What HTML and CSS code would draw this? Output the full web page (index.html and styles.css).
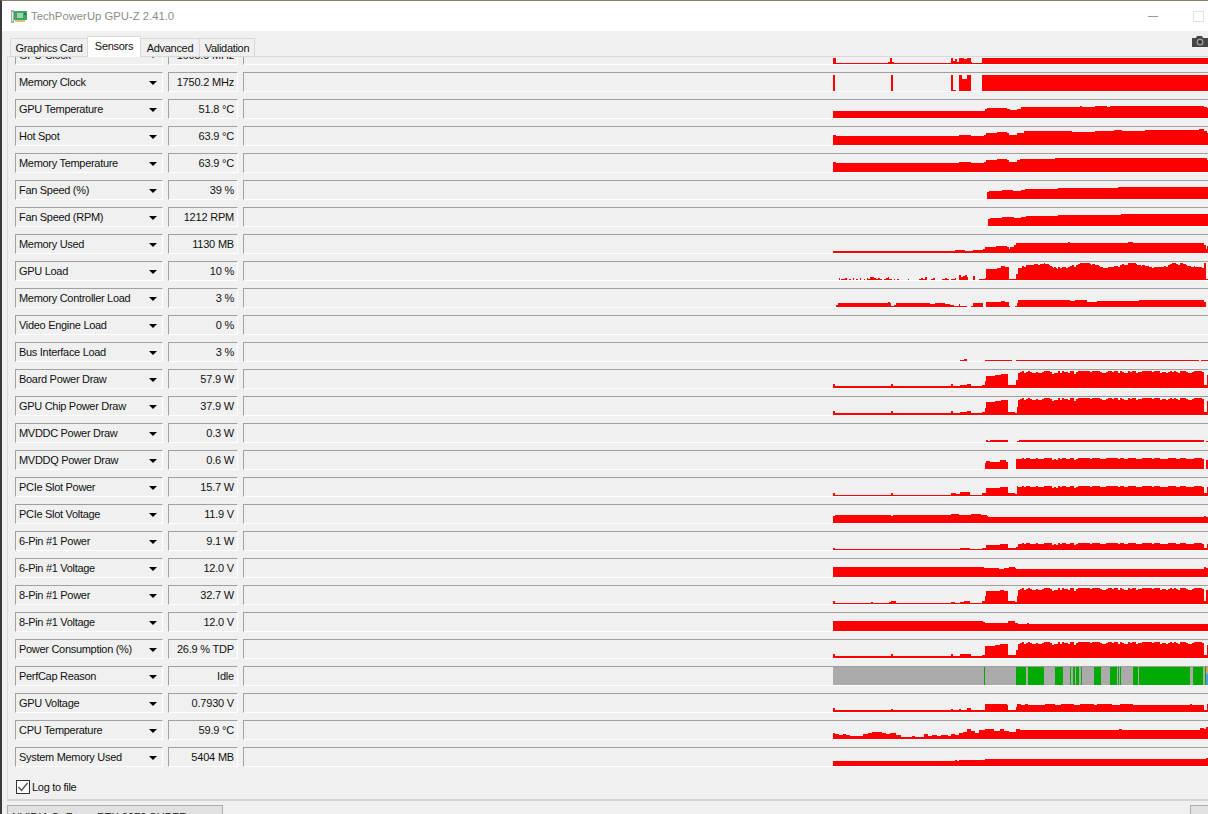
FILE: index.html
```html
<!DOCTYPE html>
<html>
<head>
  <title>TechPowerUp GPU-Z 2.41.0</title>
  <link rel="stylesheet" href="styles.css">
</head>
<body>
<div class="window">
  <header class="titlebar">
    <svg class="app-icon" width="16" height="15" viewBox="0 0 16 15">
      <rect x="0" y="1" width="3" height="13" fill="#a9b0ab"/>
      <rect x="1" y="3" width="1" height="9" fill="#e4e8e5"/>
      <rect x="3" y="2" width="13" height="9" fill="#3fa564"/>
      <rect x="6" y="4" width="6" height="5" fill="#9fd0ae"/>
      <rect x="13" y="4" width="2" height="2" fill="#1f7a42"/>
      <rect x="4" y="11" width="10" height="2" fill="#d3c47a"/>
    </svg>
    <span class="app-title">TechPowerUp GPU-Z 2.41.0</span>
    <span class="win-min"></span>
    <span class="win-max"></span>
  </header>

  <nav class="tabbar">
    <a class="tab tab-graphics">Graphics Card</a>
    <a class="tab tab-sensors active">Sensors</a>
    <a class="tab tab-advanced">Advanced</a>
    <a class="tab tab-validation">Validation</a>
    <svg class="camera" width="16" height="11" viewBox="0 0 16 11">
      <path d="M0 2H4L5 0H10L11 2H16V11H0Z" fill="#444"/>
      <circle cx="8" cy="6" r="3.5" fill="#999"/>
      <circle cx="8" cy="6" r="2" fill="#333"/>
    </svg>
  </nav>

  <main class="panel">
    <div class="rows">
      <div class="row"><div class="combo">GPU Clock<i class="arrow"></i></div><div class="value">1605.0 MHz</div><div class="graph"></div></div>
      <div class="row"><div class="combo">Memory Clock<i class="arrow"></i></div><div class="value">1750.2 MHz</div><div class="graph"></div></div>
      <div class="row"><div class="combo">GPU Temperature<i class="arrow"></i></div><div class="value">51.8 °C</div><div class="graph"></div></div>
      <div class="row"><div class="combo">Hot Spot<i class="arrow"></i></div><div class="value">63.9 °C</div><div class="graph"></div></div>
      <div class="row"><div class="combo">Memory Temperature<i class="arrow"></i></div><div class="value">63.9 °C</div><div class="graph"></div></div>
      <div class="row"><div class="combo">Fan Speed (%)<i class="arrow"></i></div><div class="value">39 %</div><div class="graph"></div></div>
      <div class="row"><div class="combo">Fan Speed (RPM)<i class="arrow"></i></div><div class="value">1212 RPM</div><div class="graph"></div></div>
      <div class="row"><div class="combo">Memory Used<i class="arrow"></i></div><div class="value">1130 MB</div><div class="graph"></div></div>
      <div class="row"><div class="combo">GPU Load<i class="arrow"></i></div><div class="value">10 %</div><div class="graph"></div></div>
      <div class="row"><div class="combo">Memory Controller Load<i class="arrow"></i></div><div class="value">3 %</div><div class="graph"></div></div>
      <div class="row"><div class="combo">Video Engine Load<i class="arrow"></i></div><div class="value">0 %</div><div class="graph"></div></div>
      <div class="row"><div class="combo">Bus Interface Load<i class="arrow"></i></div><div class="value">3 %</div><div class="graph"></div></div>
      <div class="row"><div class="combo">Board Power Draw<i class="arrow"></i></div><div class="value">57.9 W</div><div class="graph"></div></div>
      <div class="row"><div class="combo">GPU Chip Power Draw<i class="arrow"></i></div><div class="value">37.9 W</div><div class="graph"></div></div>
      <div class="row"><div class="combo">MVDDC Power Draw<i class="arrow"></i></div><div class="value">0.3 W</div><div class="graph"></div></div>
      <div class="row"><div class="combo">MVDDQ Power Draw<i class="arrow"></i></div><div class="value">0.6 W</div><div class="graph"></div></div>
      <div class="row"><div class="combo">PCIe Slot Power<i class="arrow"></i></div><div class="value">15.7 W</div><div class="graph"></div></div>
      <div class="row"><div class="combo">PCIe Slot Voltage<i class="arrow"></i></div><div class="value">11.9 V</div><div class="graph"></div></div>
      <div class="row"><div class="combo">6-Pin #1 Power<i class="arrow"></i></div><div class="value">9.1 W</div><div class="graph"></div></div>
      <div class="row"><div class="combo">6-Pin #1 Voltage<i class="arrow"></i></div><div class="value">12.0 V</div><div class="graph"></div></div>
      <div class="row"><div class="combo">8-Pin #1 Power<i class="arrow"></i></div><div class="value">32.7 W</div><div class="graph"></div></div>
      <div class="row"><div class="combo">8-Pin #1 Voltage<i class="arrow"></i></div><div class="value">12.0 V</div><div class="graph"></div></div>
      <div class="row"><div class="combo">Power Consumption (%)<i class="arrow"></i></div><div class="value">26.9 % TDP</div><div class="graph"></div></div>
      <div class="row"><div class="combo">PerfCap Reason<i class="arrow"></i></div><div class="value">Idle</div><div class="graph"></div></div>
      <div class="row"><div class="combo">GPU Voltage<i class="arrow"></i></div><div class="value">0.7930 V</div><div class="graph"></div></div>
      <div class="row"><div class="combo">CPU Temperature<i class="arrow"></i></div><div class="value">59.9 °C</div><div class="graph"></div></div>
      <div class="row"><div class="combo">System Memory Used<i class="arrow"></i></div><div class="value">5404 MB</div><div class="graph"></div></div>
    </div>
    <label class="log">
      <svg class="check" width="14" height="14" viewBox="0 0 14 14">
        <rect x="0.5" y="0.5" width="13" height="13" fill="#fff" stroke="#333"/>
        <path d="M2.5 7L5.5 10.5L11.5 3" fill="none" stroke="#555" stroke-width="1.4"/>
      </svg>
      Log to file
    </label>
  </main>

  <footer class="bottom">
    <div class="gpu-select">NVIDIA GeForce RTX 2070 SUPER</div>
    <div class="close-btn"></div>
  </footer>
</div>
<script src="graph.js"></script>
</body>
</html>
```

FILE: styles.css
```css
html, body {
  margin: 0;
  padding: 0;
  height: 814px;
  overflow: hidden;
}

body {
  font-family: "Liberation Sans", Arial, sans-serif;
  font-size: 11px;
  letter-spacing: -0.3px;
  color: #111;
  background-color: #f0f0f0;
}

.window {
  height: 814px;
  box-sizing: border-box;
  border-left: 2px solid #3c3a36;
  border-top: 1px solid #8a7f68;
  overflow: hidden;
}

.titlebar {
  height: 30px;
  background-color: #fff;
  display: flex;
  align-items: center;
  padding-left: 9px;
}

.app-title {
  margin-left: 4px;
  font-size: 11.3px;
  letter-spacing: 0;
  color: #8c8c8c;
}

.win-min {
  width: 10px;
  height: 1px;
  background-color: #999;
  margin-left: auto;
}

.win-max {
  width: 9px;
  height: 9px;
  border: 1px solid #e3e3e3;
  margin-left: 35px;
  margin-right: 4px;
}

.tabbar {
  height: 25px;
  display: flex;
  align-items: flex-end;
  padding-left: 8px;
}

.tab {
  box-sizing: border-box;
  height: 18px;
  line-height: 18px;
  margin-right: -1px;
  border: 1px solid #d9d9d9;
  border-bottom: none;
  text-align: center;
}

.tab-graphics { width: 78px; }
.tab-sensors { width: 54px; }
.tab-advanced { width: 60px; }
.tab-validation { width: 56px; }

.tab.active {
  height: 21px;
  line-height: 19px;
  background-color: #fff;
  position: relative;
  top: 1px;
  z-index: 1;
}

.camera {
  margin-left: auto;
  margin-bottom: 9px;
}

.panel {
  height: 745px;
  box-sizing: border-box;
  margin-left: 5px;
  border-left: 1px solid #d9d9d9;
  border-top: 1px solid #d9d9d9;
  border-bottom: 2px solid #d4d4d4;
  overflow: hidden;
}

.rows {
  height: 716px;
  overflow: hidden;
  padding-left: 7px;
}

.row {
  display: flex;
  height: 20px;
  margin-bottom: 7px;
}

.row:first-child {
  margin-top: -12px;
}

.combo, .value, .graph {
  box-sizing: border-box;
  height: 20px;
  flex: none;
  border: 1px solid;
  border-color: #a0a0a0 #fff #fff #a0a0a0;
}

.combo {
  width: 148px;
  margin-right: 5px;
  padding: 1px 5px 0 3px;
  line-height: 17px;
  display: flex;
  align-items: center;
  justify-content: space-between;
}

.arrow {
  width: 0;
  height: 0;
  border-left: 4px solid transparent;
  border-right: 4px solid transparent;
  border-top: 4px solid #000;
}

.value {
  width: 70px;
  margin-right: 5px;
  padding-right: 3px;
  text-align: right;
  letter-spacing: -0.2px;
  line-height: 18px;
}

.graph {
  width: 966px;
  display: flex;
  justify-content: flex-end;
}

.graph svg {
  display: block;
}

.log {
  display: flex;
  align-items: center;
  gap: 2px;
  padding: 7px 0 0 8px;
}

.check {
  flex: none;
}

.bottom {
  display: flex;
  justify-content: space-between;
  padding: 4px 0 0 5px;
}

.gpu-select, .close-btn {
  box-sizing: border-box;
  height: 24px;
  background-color: #e1e1e1;
  border: 1px solid #adadad;
}

.gpu-select {
  width: 216px;
  padding: 5px 0 0 4px;
  letter-spacing: 0;
}

.close-btn {
  width: 20px;
  margin-right: -2px;
}
```

FILE: graph.js
```js
// Sensor history. Values are in 1/3 px: [x, h, x, h, ...], each h holds until the next x.
var LOAD = [39,12,45,6,213,12,219,6,393,12,399,6,420,9,441,12,453,6,486,9,495,21,498,36,525,39,543,42,563,9,588,24,592,51,1150,9,1160,39];

var series = [
  {k: [39,18,48,3,204,6,210,18,216,6,222,3,393,18,399,9,405,14,411,6,417,18,432,14,441,18,453,6,456,3,486,18]},
  {k: [39,48,45,0,213,48,219,0,393,48,399,3,408,0,417,48,426,36,441,48,453,0,486,48]},
  {k: [39,21,495,27,501,30,560,27,570,24,590,27,603,33,780,36,786,33,825,36,860,33,870,36,1150,33,1160,30]},
  {k: [39,30,48,27,417,30,453,27,490,30,498,36,530,39,560,36,565,30,590,36,612,42,756,39,825,42,880,45,905,42,975,45,1135,48,1150,42,1160,36]},
  {k: [39,30,48,27,417,30,453,27,490,30,498,36,530,39,560,36,565,30,590,36,600,39,705,42,800,42,1150,42,1160,36]},
  {k: [39,0,501,21,507,24,546,27,579,24,603,27,615,30,714,33,894,36]},
  {k: [39,0,504,21,510,24,546,27,582,24,603,27,618,30,714,33,903,36]},
  {k: [39,6,405,9,435,6,459,9,489,12,495,18,528,21,560,18,565,12,570,18,582,24,588,30,744,33,750,30,924,33,939,30,1150,24,1156,12,1160,21]},
  {k: [39,0,57,6,60,0,63,3,69,3,75,6,81,0,87,3,93,0,99,6,102,0,108,3,114,0,120,6,123,0,132,3,135,0,141,6,144,3,150,9,162,6,168,3,174,6,180,3,186,0,192,3,198,6,204,9,207,3,216,0,222,3,225,0,231,3,237,0,264,3,267,0,297,3,303,6,309,3,315,9,321,0,333,3,339,6,345,0,366,3,375,6,381,3,387,0,393,3,405,6,408,0,417,15,423,9,429,12,435,15,441,9,444,0,459,12,465,0,477,3,495,6,498,33,530,36,543,42,555,39,565,21,567,3,588,18,594,51,1157,3,1162,40], n: 6, w: 2},
  {k: [39,0,48,6,54,12,204,14,210,12,213,3,222,6,228,12,320,12,330,10,345,12,375,9,390,6,400,3,415,9,420,3,441,0,453,3,459,12,489,0,498,15,543,18,555,15,567,3,570,0,585,3,590,12,594,20,605,22,675,20,710,22,720,20,750,18,765,20,800,16,830,19,957,22,1120,22,1150,15,1157,0,1162,15]},
  {k: []},
  {k: [39,0,420,3,430,6,440,3,441,0,495,3,576,0,588,3,1137,0,1143,3]},
  {k: LOAD, n: 8},
  {k: [39,12,45,6,213,12,219,6,393,12,399,6,420,9,441,12,453,6,486,9,495,21,498,39,525,42,543,45,563,9,585,6,590,24,593,51,1150,9,1160,42], n: 8},
  {k: [39,0,498,6,504,3,510,6,563,0,589,3,595,6,1150,0,1158,3]},
  {k: [39,0,495,18,498,24,510,21,540,27,558,21,564,0,588,30,594,33,1150,0,1158,27], n: 5},
  {k: [39,9,45,3,213,9,219,3,393,9,408,6,420,12,450,3,486,9,498,24,540,27,563,9,585,6,590,30,1150,9,1160,27], n: 5},
  {k: [39,21,45,24,213,21,219,24,393,27,417,24,453,27,483,24,500,21,504,18,1150,18,1152,21,1158,18]},
  {k: [39,6,45,3,420,6,450,3,486,6,498,15,540,18,563,6,588,9,594,21,1150,6,1160,18], n: 5},
  {k: [39,30,492,27,537,24,552,27,565,30,585,27,588,24,1150,24,1152,30,1158,27]},
  {k: [39,9,45,3,153,6,159,3,207,6,213,9,228,3,393,6,405,3,420,6,430,9,450,3,486,9,495,24,498,39,540,42,552,39,563,9,585,6,590,24,594,48,1150,9,1158,42], n: 8},
  {k: [39,30,489,27,495,24,564,30,585,24,594,21,621,24,627,21,1164,21]},
  {k: [39,12,45,6,213,12,219,6,393,12,399,6,420,12,440,12,453,6,486,9,495,36,525,39,540,42,563,9,588,24,592,48,1150,9,1160,39], n: 8},
  {green: [492,495,588,618,624,672,705,729,750,753,759,765,768,777,783,786,822,843,870,891,893,897,899,903,939,954,957,1110,1119,1149,1155,1158]},
  {k: [39,12,45,6,213,9,219,6,393,9,399,6,417,9,423,6,441,12,453,6,495,24,560,21,564,6,588,15,591,24,603,21,615,24,624,21,675,24,705,21,723,24,760,21,780,24,822,21,831,24,876,21,900,24,939,21,1110,24,1116,21,1150,6,1160,24]},
  {k: [39,18,45,15,57,12,69,15,78,12,90,9,129,15,144,18,156,21,186,18,198,15,210,18,228,12,243,6,276,9,285,6,312,15,324,9,336,12,351,9,363,12,384,9,393,15,405,12,417,18,429,21,441,30,453,24,465,18,477,27,495,30,520,24,540,30,552,24,565,21,588,30,600,27,897,30,906,27,1140,33,1152,30,1158,36]},
  {k: [39,15,405,18,411,15,417,18,495,21,1158,24]}
];

// same jitter for every sensor, so loads move together like the real ones.
// squared so most steps stay near the top and only a few dip
function jitter(x, amp) {
  var v = Math.sin(x * 12.9898) * 43758.5453;
  v = v - Math.floor(v);
  return Math.round(v * v * amp / 3) * 3;
}

function buildPoints(s) {
  var k = s.k, pts = ['39,54'], h = 0;
  for (var x = 39; x < 1164; x += 3) {
    for (var i = 0; i < k.length; i += 2) {
      if (k[i] <= x) h = k[i + 1];
    }
    var v = h;
    if (s.n && x >= 594 && x < 1150) {
      v = h - jitter(x - x % 6, s.n);
      if (s.w) v -= Math.round((1 + Math.sin(x / 22)) * s.w) * 3;
    }
    pts.push(x + ',' + (54 - v), (x + 3) + ',' + (54 - v));
  }
  pts.push('1164,54');
  return pts.join(' ');
}

function drawGraph(el, s) {
  var html = '<svg width="375" height="18" viewBox="39 0 1125 54" shape-rendering="crispEdges">';
  if (s.green) {
    html += '<rect x="39" y="0" width="1125" height="54" fill="#aaa"/>';
    for (var i = 0; i < s.green.length; i += 2) {
      html += '<rect x="' + s.green[i] + '" y="0" width="' + (s.green[i + 1] - s.green[i]) + '" height="54" fill="#00aa00"/>';
    }
    html += '<rect x="1158" y="0" width="6" height="15" fill="#e8a33d"/>';
    html += '<rect x="1158" y="21" width="6" height="33" fill="#4a9fd8"/>';
  } else if (s.k.length) {
    html += '<polygon fill="#f00" points="' + buildPoints(s) + '"/>';
  }
  el.innerHTML = html + '</svg>';
}

var graphs = document.querySelectorAll('.graph');
for (var i = 0; i < graphs.length; i++) {
  drawGraph(graphs[i], series[i]);
}
```
